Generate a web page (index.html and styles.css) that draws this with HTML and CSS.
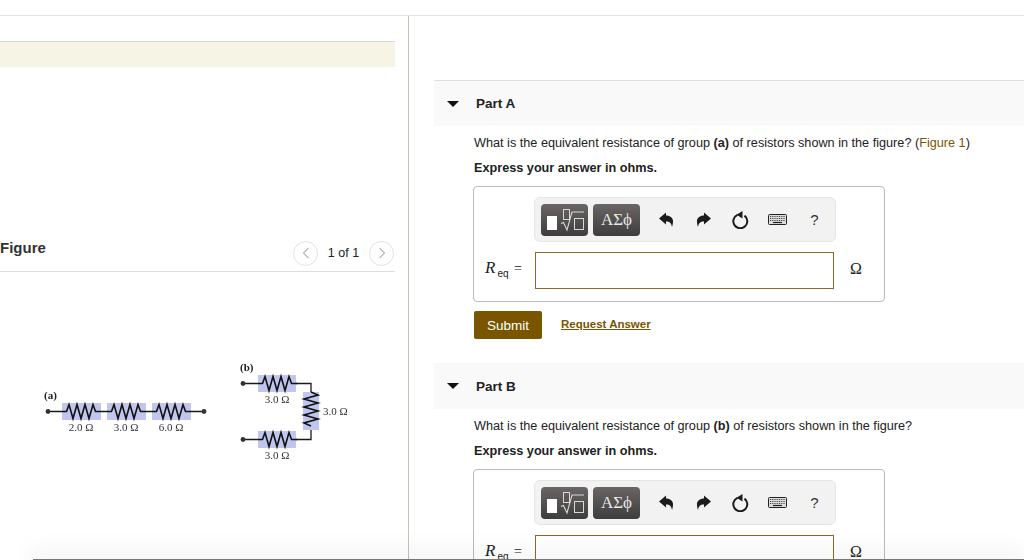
FILE: index.html
```html
<!DOCTYPE html>
<html lang="en">
<head>
  <meta charset="UTF-8">
  <title>Part A</title>
  <link rel="stylesheet" href="styles.css">
</head>
<body>
  <svg width="0" height="0" class="defs">
    <defs>
      <g id="zig-h">
        <path d="M0 8.5 h4.5 l2.5 -7 l4 14 l4 -14 l4 14 l4 -14 l4 14 l4 -14 l2.5 7 h5.5" fill="none" stroke="#111" stroke-width="1.6"/>
      </g>
      <g id="tool-math">
        <rect x="6" y="12" width="10" height="14" fill="#fff"/>
        <path d="M20 19.5 l2.5 -1 l3.5 7.5 l5 -18 h12" fill="none" stroke="#d8d8d8" stroke-width="1.1"/>
        <rect x="22.5" y="5.5" width="6" height="10" fill="none" stroke="#d8d8d8"/>
        <rect x="33.5" y="14.5" width="9" height="11" fill="none" stroke="#d8d8d8"/>
      </g>
      <path id="tool-undo" d="M0 6.5 L7 0.5 V3.5 C11 3.5 14.5 6 14 10 C13.9 12 13.5 13.5 13 15 C12.5 11.5 11 9.5 7 9.5 V12.5 Z" fill="#1c1c1c"/>
      <g id="tool-reload">
        <path d="M6.5 3.8 A7 7 0 1 0 13.5 4.6" fill="none" stroke="#1c1c1c" stroke-width="2"/>
        <path d="M11.5 0 V7.5 L5.5 3.8 Z" fill="#1c1c1c"/>
      </g>
      <g id="tool-keys">
        <rect x="0.5" y="0.5" width="18" height="10" rx="1" fill="#ddd" stroke="#222"/>
        <path d="M2 2.5 H17 M2 4.5 H17 M2 6.5 H17" stroke="#444" stroke-dasharray="1 0.8"/>
        <path d="M5 8.5 H14" stroke="#222" stroke-width="1.2"/>
      </g>
    </defs>
  </svg>
  <div class="top-bar"></div>
  <div class="main">
    <div class="left">
      <div class="banner"></div>
      <div class="figure-head">
        <h2>Figure</h2>
        <div class="pager">
          <span class="pager-btn">
            <svg width="8" height="12" viewBox="0 0 8 12"><path d="M6.5 1 L1.5 6 L6.5 11" fill="none" stroke="#bbb" stroke-width="1.3"/></svg>
          </span>
          <span class="pager-text">1 of 1</span>
          <span class="pager-btn">
            <svg width="8" height="12" viewBox="0 0 8 12"><path d="M1.5 1 L6.5 6 L1.5 11" fill="none" stroke="#bbb" stroke-width="1.3"/></svg>
          </span>
        </div>
      </div>
      <svg class="figure" width="340" height="110" viewBox="30 355 340 110">
        <g fill="#c0c6ee">
          <rect x="62" y="403" width="39" height="17"/>
          <rect x="107" y="403" width="39" height="17"/>
          <rect x="152" y="403" width="39" height="17"/>
          <rect x="258" y="375" width="38" height="17"/>
          <rect x="303" y="392" width="16" height="38"/>
          <rect x="258" y="431" width="38" height="17"/>
        </g>
        <g fill="none" stroke="#1a1a1a" stroke-width="1.3">
          <path d="M48 411.5 H62 M101 411.5 H107 M146 411.5 H152 M191 411.5 H204"/>
          <path d="M243 383.5 H258 M296 383.5 H311 V392 M311 430 V439.5 H296 M258 439.5 H243"/>
        </g>
        <use href="#zig-h" x="62" y="403"/>
        <use href="#zig-h" x="107" y="403"/>
        <use href="#zig-h" x="152" y="403"/>
        <use href="#zig-h" x="258" y="375"/>
        <use href="#zig-h" x="258" y="431"/>
        <path d="M311 392 l7 3 l-14 4 l14 4 l-14 4 l14 4 l-14 4 l14 4 l-14 4 l7 3" fill="none" stroke="#111" stroke-width="1.6"/>
        <g fill="#333">
          <circle cx="48" cy="411.5" r="2.4"/>
          <circle cx="204" cy="411.5" r="2.4"/>
          <circle cx="243" cy="383.5" r="2.4"/>
          <circle cx="243" cy="439.5" r="2.4"/>
        </g>
        <g class="fig-label">
          <text x="81" y="431" text-anchor="middle">2.0 Ω</text>
          <text x="126" y="431" text-anchor="middle">3.0 Ω</text>
          <text x="171" y="431" text-anchor="middle">6.0 Ω</text>
          <text x="277" y="403" text-anchor="middle">3.0 Ω</text>
          <text x="323" y="415">3.0 Ω</text>
          <text x="277" y="459" text-anchor="middle">3.0 Ω</text>
          <text x="44" y="399" class="fig-bold">(a)</text>
          <text x="240" y="371" class="fig-bold">(b)</text>
        </g>
      </svg>
    </div>

    <div class="right">
      <section class="part part-a">
        <div class="part-head">
          <span class="caret"></span>
          <h3>Part A</h3>
        </div>
        <div class="part-body">
          <p class="question">What is the equivalent resistance of group <b>(a)</b> of resistors shown in the figure? (<a class="fig-link">Figure 1</a>)</p>
          <p class="express">Express your answer in ohms.</p>
          <div class="answer-box">
            <div class="toolbar">
              <span class="tool-btn"><svg width="47" height="32" viewBox="0 0 47 32"><use href="#tool-math"/></svg></span>
              <span class="tool-btn greek">ΑΣϕ</span>
              <span class="tool-icons">
                <span class="tool-icon"><svg width="15" height="15" viewBox="0 0 15 15"><use href="#tool-undo"/></svg></span>
                <span class="tool-icon"><svg class="flip" width="15" height="15" viewBox="0 0 15 15"><use href="#tool-undo"/></svg></span>
                <span class="tool-icon"><svg width="18" height="18" viewBox="1 0 18 18"><use href="#tool-reload"/></svg></span>
                <span class="tool-icon"><svg width="19" height="11" viewBox="0 0 19 11"><use href="#tool-keys"/></svg></span>
                <span class="tool-icon help">?</span>
              </span>
            </div>
            <div class="answer-row">
              <span class="req"><i>R</i><sub>eq</sub> =</span>
              <span class="answer-input"></span>
              <span class="unit">Ω</span>
            </div>
          </div>
          <div class="actions">
            <button class="submit">Submit</button>
            <a class="request">Request Answer</a>
          </div>
        </div>
      </section>

      <section class="part">
        <div class="part-head">
          <span class="caret"></span>
          <h3>Part B</h3>
        </div>
        <div class="part-body">
          <p class="question">What is the equivalent resistance of group <b>(b)</b> of resistors shown in the figure?</p>
          <p class="express">Express your answer in ohms.</p>
          <div class="answer-box">
            <div class="toolbar">
              <span class="tool-btn"><svg width="47" height="32" viewBox="0 0 47 32"><use href="#tool-math"/></svg></span>
              <span class="tool-btn greek">ΑΣϕ</span>
              <span class="tool-icons">
                <span class="tool-icon"><svg width="15" height="15" viewBox="0 0 15 15"><use href="#tool-undo"/></svg></span>
                <span class="tool-icon"><svg class="flip" width="15" height="15" viewBox="0 0 15 15"><use href="#tool-undo"/></svg></span>
                <span class="tool-icon"><svg width="18" height="18" viewBox="1 0 18 18"><use href="#tool-reload"/></svg></span>
                <span class="tool-icon"><svg width="19" height="11" viewBox="0 0 19 11"><use href="#tool-keys"/></svg></span>
                <span class="tool-icon help">?</span>
              </span>
            </div>
            <div class="answer-row">
              <span class="req"><i>R</i><sub>eq</sub> =</span>
              <span class="answer-input"></span>
              <span class="unit">Ω</span>
            </div>
          </div>
        </div>
      </section>
    </div>
  </div>
  <div class="page-shadow"></div>
</body>
</html>
```

FILE: styles.css
```css
html, body {
  height: 100%;
}

body {
  font-family: "Liberation Sans", Arial, sans-serif;
  font-size: 12.68px;
  color: #222;
  margin: 0;
  background-color: #fff;
  overflow: hidden;
  position: relative;
}

.defs {
  position: absolute;
}

.top-bar {
  height: 15px;
  border-bottom: 1px solid #e3e3e3;
}

.main {
  display: flex;
  height: 544px;
}

/* left pane */
.left {
  width: 408px;
  border-right: 1px solid #cbbfb3;
  flex-shrink: 0;
}

.banner {
  width: 395px;
  height: 25px;
  margin-top: 25px;
  border-top: 1px solid #d6d6d6;
  background-color: #f6f4e4;
}

.figure-head {
  width: 395px;
  height: 35px;
  margin-top: 169px;
  display: flex;
  justify-content: space-between;
  border-bottom: 1px solid #ddd;
}

.figure-head h2 {
  margin: 0;
  font-size: 15px;
  font-weight: bold;
  color: #333;
  line-height: 22px;
  height: 22px;
  margin-top: 1px;
}

.pager {
  display: flex;
  align-items: center;
  height: 24px;
  margin-top: 5px;
  margin-right: 1px;
}

.pager-btn {
  width: 23px;
  height: 23px;
  border: 1px solid #e2e2e2;
  border-radius: 50%;
  display: flex;
  align-items: center;
  justify-content: center;
}

.pager-text {
  font-size: 12.5px;
  width: 51px;
  text-align: center;
}

.figure {
  display: block;
  margin-top: 83px;
  margin-left: 30px;
  filter: blur(0.5px);
}

.fig-label text {
  font-family: "Liberation Serif", serif;
  font-size: 11px;
  fill: #333;
}

.fig-label .fig-bold {
  font-weight: bold;
  fill: #222;
}

/* right pane */
.right {
  flex: 1;
  padding-left: 25px;
  min-width: 0;
}

.part-a {
  margin-top: 64px;
  margin-bottom: 24px;
}

.part-head {
  height: 45px;
  border-top: 1px solid #e0e0e0;
  background-color: #f9f9f9;
  display: flex;
  align-items: center;
}

.part + .part .part-head {
  border-top: none;
  height: 46px;
}

.part-head h3 {
  margin: 0;
  font-size: 13.5px;
  font-weight: bold;
  color: #222;
}

.caret {
  width: 0;
  height: 0;
  margin-left: 13px;
  margin-right: 17px;
  border-left: 6px solid transparent;
  border-right: 6px solid transparent;
  border-top: 6px solid #111;
}

.part-body {
  padding-left: 40px;
}

.question {
  margin: 0;
  padding-top: 10px;
  line-height: 15px;
}

.fig-link {
  color: #7a5500;
}

.express {
  margin: 10px 0 0;
  line-height: 15px;
  font-weight: bold;
}

.answer-box {
  box-sizing: border-box;
  width: 412px;
  height: 116px;
  margin-top: 10px;
  margin-left: -1px;
  padding: 10px 0 0 60px;
  border: 1px solid #bcbcbc;
  border-radius: 4px;
}

.toolbar {
  box-sizing: border-box;
  width: 302px;
  height: 45px;
  display: flex;
  align-items: center;
  gap: 5px;
  padding-left: 6px;
  background-color: #f2f2f2;
  border: 1px solid #e6e6e6;
  border-radius: 6px;
}

.tool-btn {
  box-sizing: border-box;
  width: 47px;
  height: 32px;
  display: flex;
  align-items: center;
  background: linear-gradient(#6a6666, #3e3c3c);
  border-radius: 4px;
}

.tool-btn.greek {
  justify-content: center;
  color: #e8e8e8;
  font-family: "Liberation Serif", serif;
  font-size: 17px;
}

.tool-icons {
  display: flex;
  align-items: center;
  margin-left: 3px;
}

.tool-icon {
  width: 37px;
  display: flex;
  justify-content: center;
}

.flip {
  transform: scaleX(-1);
}

.help {
  font-size: 15px;
  color: #333;
}

.answer-row {
  display: flex;
  align-items: center;
  margin-top: 10px;
  margin-left: -49px;
}

.req {
  width: 50px;
  font-family: "Liberation Serif", serif;
  font-size: 14px;
  line-height: 16px;
  white-space: nowrap;
  position: relative;
  top: -2px;
}

.req i {
  font-size: 17px;
}

.req sub {
  font-family: "Liberation Sans", sans-serif;
  font-size: 10px;
  line-height: 0;
  margin-left: 2px;
  margin-right: 2px;
}

.answer-input {
  box-sizing: border-box;
  width: 299px;
  height: 37px;
  border: 1px solid #8a6a2a;
  background-color: #fff;
}

.unit {
  width: 44px;
  text-align: center;
  font-family: "Liberation Serif", serif;
  font-size: 16px;
  position: relative;
  top: -2px;
}

.actions {
  display: flex;
  align-items: center;
  margin-top: 9px;
}

.submit {
  width: 68px;
  height: 28px;
  padding: 0;
  border: none;
  border-radius: 2px;
  background-color: #7a5500;
  color: #fff;
  font-family: inherit;
  font-size: 13.5px;
}

.request {
  margin-left: 19px;
  margin-bottom: 2px;
  color: #7a5500;
  font-size: 11.5px;
  font-weight: bold;
  text-decoration: underline;
}

.page-shadow {
  position: absolute;
  left: 33px;
  right: 0;
  bottom: 0;
  height: 1px;
  background-color: #777;
  box-shadow: 0 0 26px 2px rgba(0, 0, 0, 0.2);
}
```
